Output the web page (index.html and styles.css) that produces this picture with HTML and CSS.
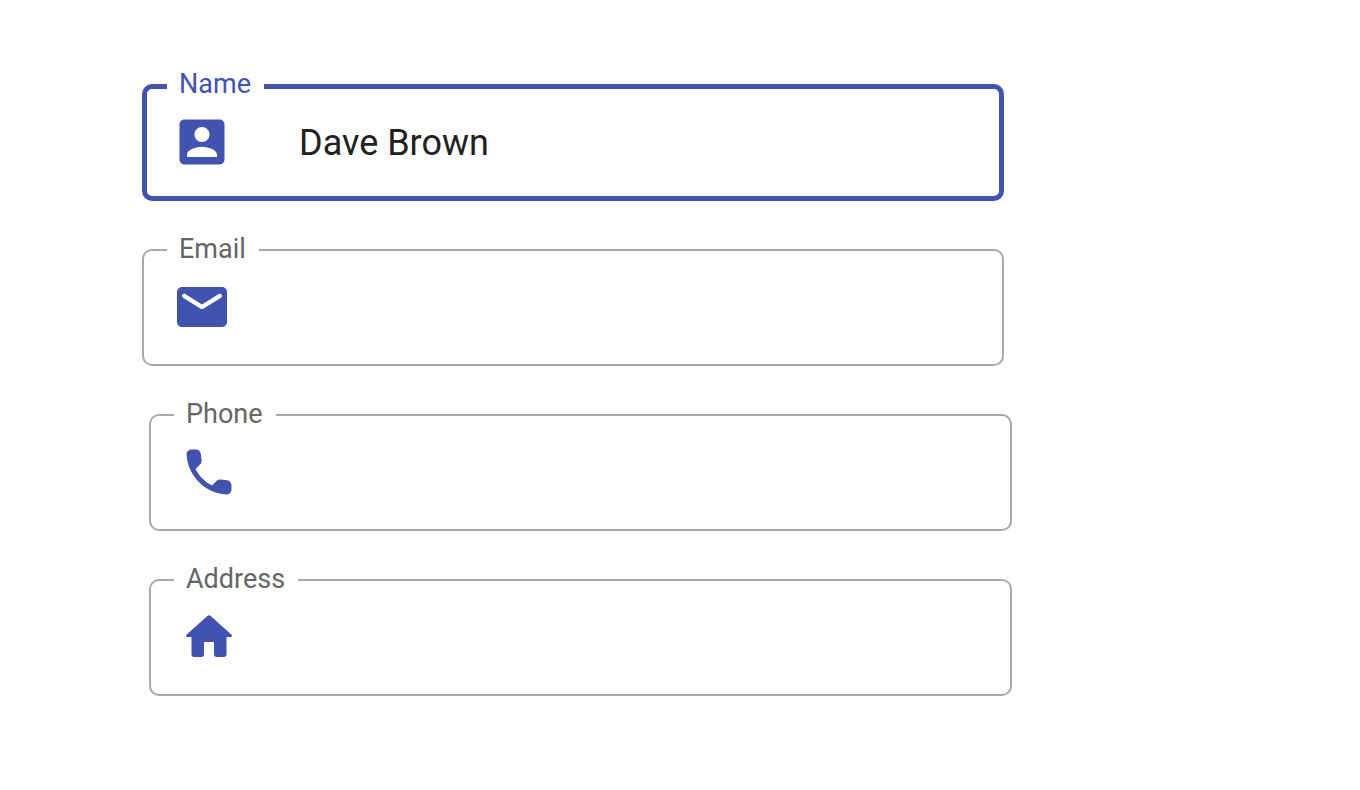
FILE: index.html
```
<!DOCTYPE html>
<html lang="en">
<head>
<meta charset="utf-8">
<meta name="viewport" content="width=device-width, initial-scale=1">
<title>Contact details</title>
<link rel="stylesheet" href="styles.css">
</head>
<body>
<form class="form">
  <div class="field field-active">
    <label class="label" for="name">Name</label>
    <svg class="icon" viewBox="0 0 24 24" aria-hidden="true"><path d="M3 5v14c0 1.1.89 2 2 2h14c1.1 0 2-.9 2-2V5c0-1.1-.9-2-2-2H5c-1.11 0-2 .9-2 2zm12 4c0 1.66-1.34 3-3 3s-3-1.34-3-3 1.34-3 3-3 3 1.34 3 3zm-9 8c0-2 4-3.1 6-3.1s6 1.1 6 3.1v1H6v-1z"/></svg>
    <input class="input" id="name" type="text" value="Dave Brown">
  </div>
  <div class="field">
    <label class="label" for="email">Email</label>
    <svg class="icon" viewBox="0 0 24 24" aria-hidden="true"><path d="M20 4H4c-1.1 0-2 .9-2 2v12c0 1.1.9 2 2 2h16c1.1 0 2-.9 2-2V6c0-1.1-.9-2-2-2zm-.4 4.25l-7.07 4.42c-.32.2-.74.2-1.06 0L4.4 8.25c-.25-.16-.4-.43-.4-.72 0-.67.73-1.07 1.3-.72L12 11l6.7-4.19c.57-.35 1.3.05 1.3.72 0 .29-.15.56-.4.72z"/></svg>
    <input class="input" id="email" type="email">
  </div>
  <div class="field field-indent">
    <label class="label" for="phone">Phone</label>
    <svg class="icon" viewBox="0 0 24 24" aria-hidden="true"><path d="M19.23 15.26l-2.54-.29c-.61-.07-1.21.14-1.64.57l-1.84 1.84c-2.83-1.44-5.15-3.75-6.59-6.59l1.85-1.85c.43-.43.64-1.03.57-1.64l-.29-2.52c-.12-1.01-.97-1.77-1.99-1.77H5.03c-1.13 0-2.07.94-2 2.07.53 8.54 7.36 15.36 15.89 15.89 1.13.07 2.07-.87 2.07-2v-1.73c.01-1.01-.75-1.86-1.76-1.98z"/></svg>
    <input class="input" id="phone" type="tel">
  </div>
  <div class="field field-indent">
    <label class="label" for="address">Address</label>
    <svg class="icon" viewBox="0 0 24 24" aria-hidden="true"><path d="M10 19v-5h4v5c0 .55.45 1 1 1h3c.55 0 1-.45 1-1v-7h1.7c.46 0 .68-.57.33-.87L12.67 3.6c-.38-.34-.96-.34-1.34 0l-8.36 7.53c-.34.3-.13.87.33.87H5v7c0 .55.45 1 1 1h3c.55 0 1-.45 1-1z"/></svg>
    <input class="input" id="address" type="text">
  </div>
</form>
</body>
</html>
```
FILE: styles.css
```
* {
  box-sizing: border-box;
}

body {
  margin: 0;
  background: #fff;
  font-family: Roboto, "Liberation Sans", sans-serif;
}

.form {
  display: flex;
  flex-direction: column;
  gap: 48px;
  padding: 84px 348px 84px 142px;
}

.field {
  position: relative;
  display: flex;
  align-items: center;
  gap: 67px;
  min-height: 117px;
  margin-right: 8px;
  padding: 0 28px 2px;
  border: 2px solid #a9a9a9;
  border-radius: 10px;
}

.field-active {
  padding: 0 25px 2px;
  border: 5px solid #4153af;
}

.field-indent {
  margin-right: 0;
  margin-left: 7px;
}

.label {
  position: absolute;
  top: -18px;
  left: 23px;
  padding: 0 13px 0 12px;
  background: #fff;
  color: #666;
  font-size: 27px;
  line-height: 32px;
}

.field-active .label {
  top: -21px;
  left: 20px;
  color: #4153af;
}

.icon {
  flex: none;
  width: 60px;
  height: 60px;
  fill: #4153af;
}

.input {
  flex: 1;
  min-width: 0;
  padding: 2px 0 0;
  border: 0;
  outline: 0;
  background: transparent;
  color: #212121;
  font: inherit;
  font-size: 36px;
  line-height: 44px;
}
```
